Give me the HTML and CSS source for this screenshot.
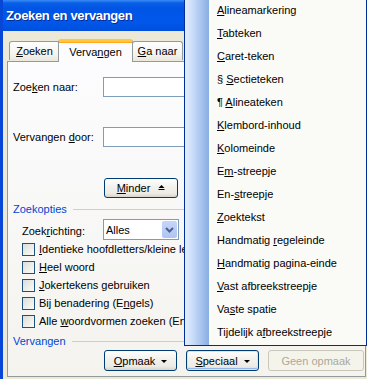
FILE: index.html
```html
<!DOCTYPE html>
<html lang="nl">
<head>
  <meta charset="UTF-8">
  <title>Zoeken en vervangen</title>
  <link rel="stylesheet" href="styles.css">
</head>
<body>
  <div class="window">
    <div class="titlebar">Zoeken en vervangen</div>

    <div class="dialog">
      <div class="tabs">
        <div class="tab first"><u>Z</u>oeken</div>
        <div class="tab active">Verva<u>n</u>gen</div>
        <div class="tab last"><u>G</u>a naar</div>
      </div>

      <div class="panel">
        <div class="field">
          <span class="label">Zoe<u>k</u>en naar:</span>
          <div class="textbox"></div>
        </div>
        <div class="field second">
          <span class="label">Vervangen <u>d</u>oor:</span>
          <div class="textbox"></div>
        </div>

        <div class="less-row">
          <button class="btn less"><span><u>M</u>inder</span>
            <svg width="7" height="6" viewBox="0 0 7 6"><polygon points="3.5,0 6.5,3 0.5,3" fill="#000"/><rect x="0.5" y="4" width="6" height="1" fill="#000"/></svg>
          </button>
        </div>

        <div class="group-head">Zoekopties</div>

        <div class="direction">
          <span class="label">Zoek<u>r</u>ichting:</span>
          <div class="select">
            <span>Alles</span>
            <span class="arrow">
              <svg width="9" height="6" viewBox="0 0 9 6"><polyline points="1,1 4.5,4.5 8,1" fill="none" stroke="#4d6185" stroke-width="2"/></svg>
            </span>
          </div>
        </div>

        <div class="check"><span class="box"></span><span><u>I</u>dentieke hoofdletters/kleine letters</span></div>
        <div class="check"><span class="box"></span><span><u>H</u>eel woord</span></div>
        <div class="check"><span class="box"></span><span><u>J</u>okertekens gebruiken</span></div>
        <div class="check"><span class="box"></span><span>Bij benadering (E<u>n</u>gels)</span></div>
        <div class="check"><span class="box"></span><span>Alle <u>w</u>oordvormen zoeken (Engels)</span></div>

        <div class="group-head">Vervangen</div>

        <div class="buttons">
          <button class="btn"><span><u>O</u>pmaak</span><span class="caret"></span></button>
          <button class="btn focus"><span><u>S</u>peciaal</span><span class="caret"></span></button>
          <button class="btn wide" disabled>Geen opmaak</button>
        </div>
      </div>
    </div>
  </div>

  <!-- dropdown of the Speciaal button -->
  <ul class="menu">
    <li><u>A</u>lineamarkering</li>
    <li><u>T</u>abteken</li>
    <li><u>C</u>aret-teken</li>
    <li>§ <u>S</u>ectieteken</li>
    <li>¶ <u>A</u>lineateken</li>
    <li><u>K</u>lembord-inhoud</li>
    <li><u>K</u>olomeinde</li>
    <li>E<u>m</u>-streepje</li>
    <li>En-<u>s</u>treepje</li>
    <li><u>Z</u>oektekst</li>
    <li>Handmatig <u>r</u>egeleinde</li>
    <li><u>H</u>andmatig pagina-einde</li>
    <li><u>V</u>ast afbreekstreepje</li>
    <li>Va<u>s</u>te spatie</li>
    <li>Tijdelijk a<u>f</u>breekstreepje</li>
  </ul>
</body>
</html>
```

FILE: styles.css
```css
/* Windows XP style dialog */
body {
  margin: 0;
  width: 367px;
  height: 379px;
  overflow: hidden;
  position: relative;
  background: #ece9d8;
  font-family: "Liberation Sans", Arial, sans-serif;
  font-size: 11px;
  color: #000;
}

u {
  text-decoration: underline;
  text-underline-offset: 1px;
}

.window {
  border-left: 3px solid #0846d8;
  height: 379px;
  box-sizing: border-box;
}

.titlebar {
  height: 31px;
  line-height: 31px;
  padding-left: 3px;
  color: #fff;
  font-weight: bold;
  font-size: 13px;
  letter-spacing: -0.35px;
  text-shadow: 1px 1px 0 #0a2a90;
  background: linear-gradient(#3a8cf7 0, #0a5fe6 3px, #0055e5 8px, #0057ea 22px, #004fdc 31px);
}

.dialog {
  padding: 7px 0 0 4px;
}

/* tabs */
.tabs {
  display: flex;
  align-items: flex-end;
  padding-left: 2px;
  height: 23px;
  position: relative;
  z-index: 1;
}

.tab {
  box-sizing: border-box;
  height: 19px;
  line-height: 19px;
  text-align: center;
  white-space: nowrap;
  border: 1px solid #919b9c;
  border-bottom: none;
  border-radius: 3px 3px 0 0;
  background: linear-gradient(#fefefe, #f4f3ee 70%, #e9e8e2);
  margin-bottom: 1px;
}

.tab.first {
  width: 51px;
}

.tab.last {
  width: 51px;
}

.tab.active {
  width: 75px;
  height: 23px;
  line-height: 20px;
  margin: 0 -1px -1px -2px;
  border-top: 3px solid #ffc83c;
  box-shadow: inset 0 1px 0 #ffa61f;
  background: #fcfcfe;
}

.panel {
  border: 1px solid #919b9c;
  background: linear-gradient(#fcfcfe, #f4f3ee);
  margin-right: 1px;
  padding: 15px 0 5px 5px;
}

.field {
  display: flex;
  align-items: center;
  height: 20px;
}

.field.second {
  margin-top: 30px;
}

.label {
  width: 90px;
  flex: none;
}

.textbox {
  flex: 1;
  height: 18px;
  background: #fff;
  border: 1px solid #7f9db9;
}

.less-row {
  margin-top: 31px;
  padding-left: 91px;
  height: 20px;
}

/* buttons */
.btn {
  font: inherit;
  color: #000;
  height: 21px;
  width: 73px;
  padding: 0;
  border: 1px solid #003c74;
  border-radius: 3px;
  background: linear-gradient(#fff, #f3f2ed 40%, #ecebe5 80%, #d8d4c8);
  display: inline-flex;
  align-items: center;
  justify-content: center;
  gap: 6px;
}

.btn.less {
  width: 74px;
  height: 20px;
  gap: 8px;
}

.btn.focus {
  box-shadow: inset 0 0 0 1px #cee7ff, inset 0 -1px 0 1px #98b8ea;
}

.btn.wide {
  width: 96px;
}

.btn:disabled {
  color: #aca899;
  border-color: #c9c7ba;
  background: #f5f4ea;
}

.caret {
  border-left: 3px solid transparent;
  border-right: 3px solid transparent;
  border-top: 3px solid #000;
  margin-top: 1px;
}

.group-head {
  display: flex;
  align-items: center;
  height: 14px;
  color: #0046d5;
  margin-top: 4px;
}

.group-head::after {
  content: "";
  flex: 1;
  border-top: 1px solid #d0d0bf;
  margin: 1px 0 0 6px;
}

.direction {
  display: flex;
  align-items: center;
  height: 21px;
  margin-top: 3px;
  padding-left: 9px;
}

.direction .label {
  width: 81px;
  padding-top: 3px;
}

.select {
  width: 72px;
  height: 19px;
  border: 1px solid #7f9db9;
  background: #fff;
  display: flex;
  align-items: center;
  justify-content: space-between;
  padding-left: 2px;
}

.select .arrow {
  width: 15px;
  height: 17px;
  margin-right: 1px;
  border-radius: 2px;
  background: linear-gradient(#c6d6fa, #b7cbf7 60%, #afc4f3);
  display: flex;
  align-items: center;
  justify-content: center;
}

.check {
  display: flex;
  align-items: center;
  height: 18px;
  padding-left: 9px;
  white-space: nowrap;
}

.box {
  width: 11px;
  height: 11px;
  border: 1px solid #1c5180;
  background: linear-gradient(135deg, #dcdcd7, #fbfbf9);
  margin-right: 4px;
  flex: none;
}

.buttons {
  display: flex;
  gap: 9px;
  margin-top: 2px;
  padding-left: 91px;
}

/* Speciaal dropdown */
.menu {
  position: absolute;
  top: -3px;
  left: 184px;
  width: 181px;
  margin: 0;
  padding: 1px 0;
  list-style: none;
  border: 1px solid #002d96;
  background: linear-gradient(90deg, #e3efff 0, #c9dcf8 8px, #87ade4 24px, #fafaf7 24px);
  z-index: 5;
}

.menu li {
  height: 23px;
  line-height: 23px;
  padding-left: 32px;
  white-space: nowrap;
}
```
